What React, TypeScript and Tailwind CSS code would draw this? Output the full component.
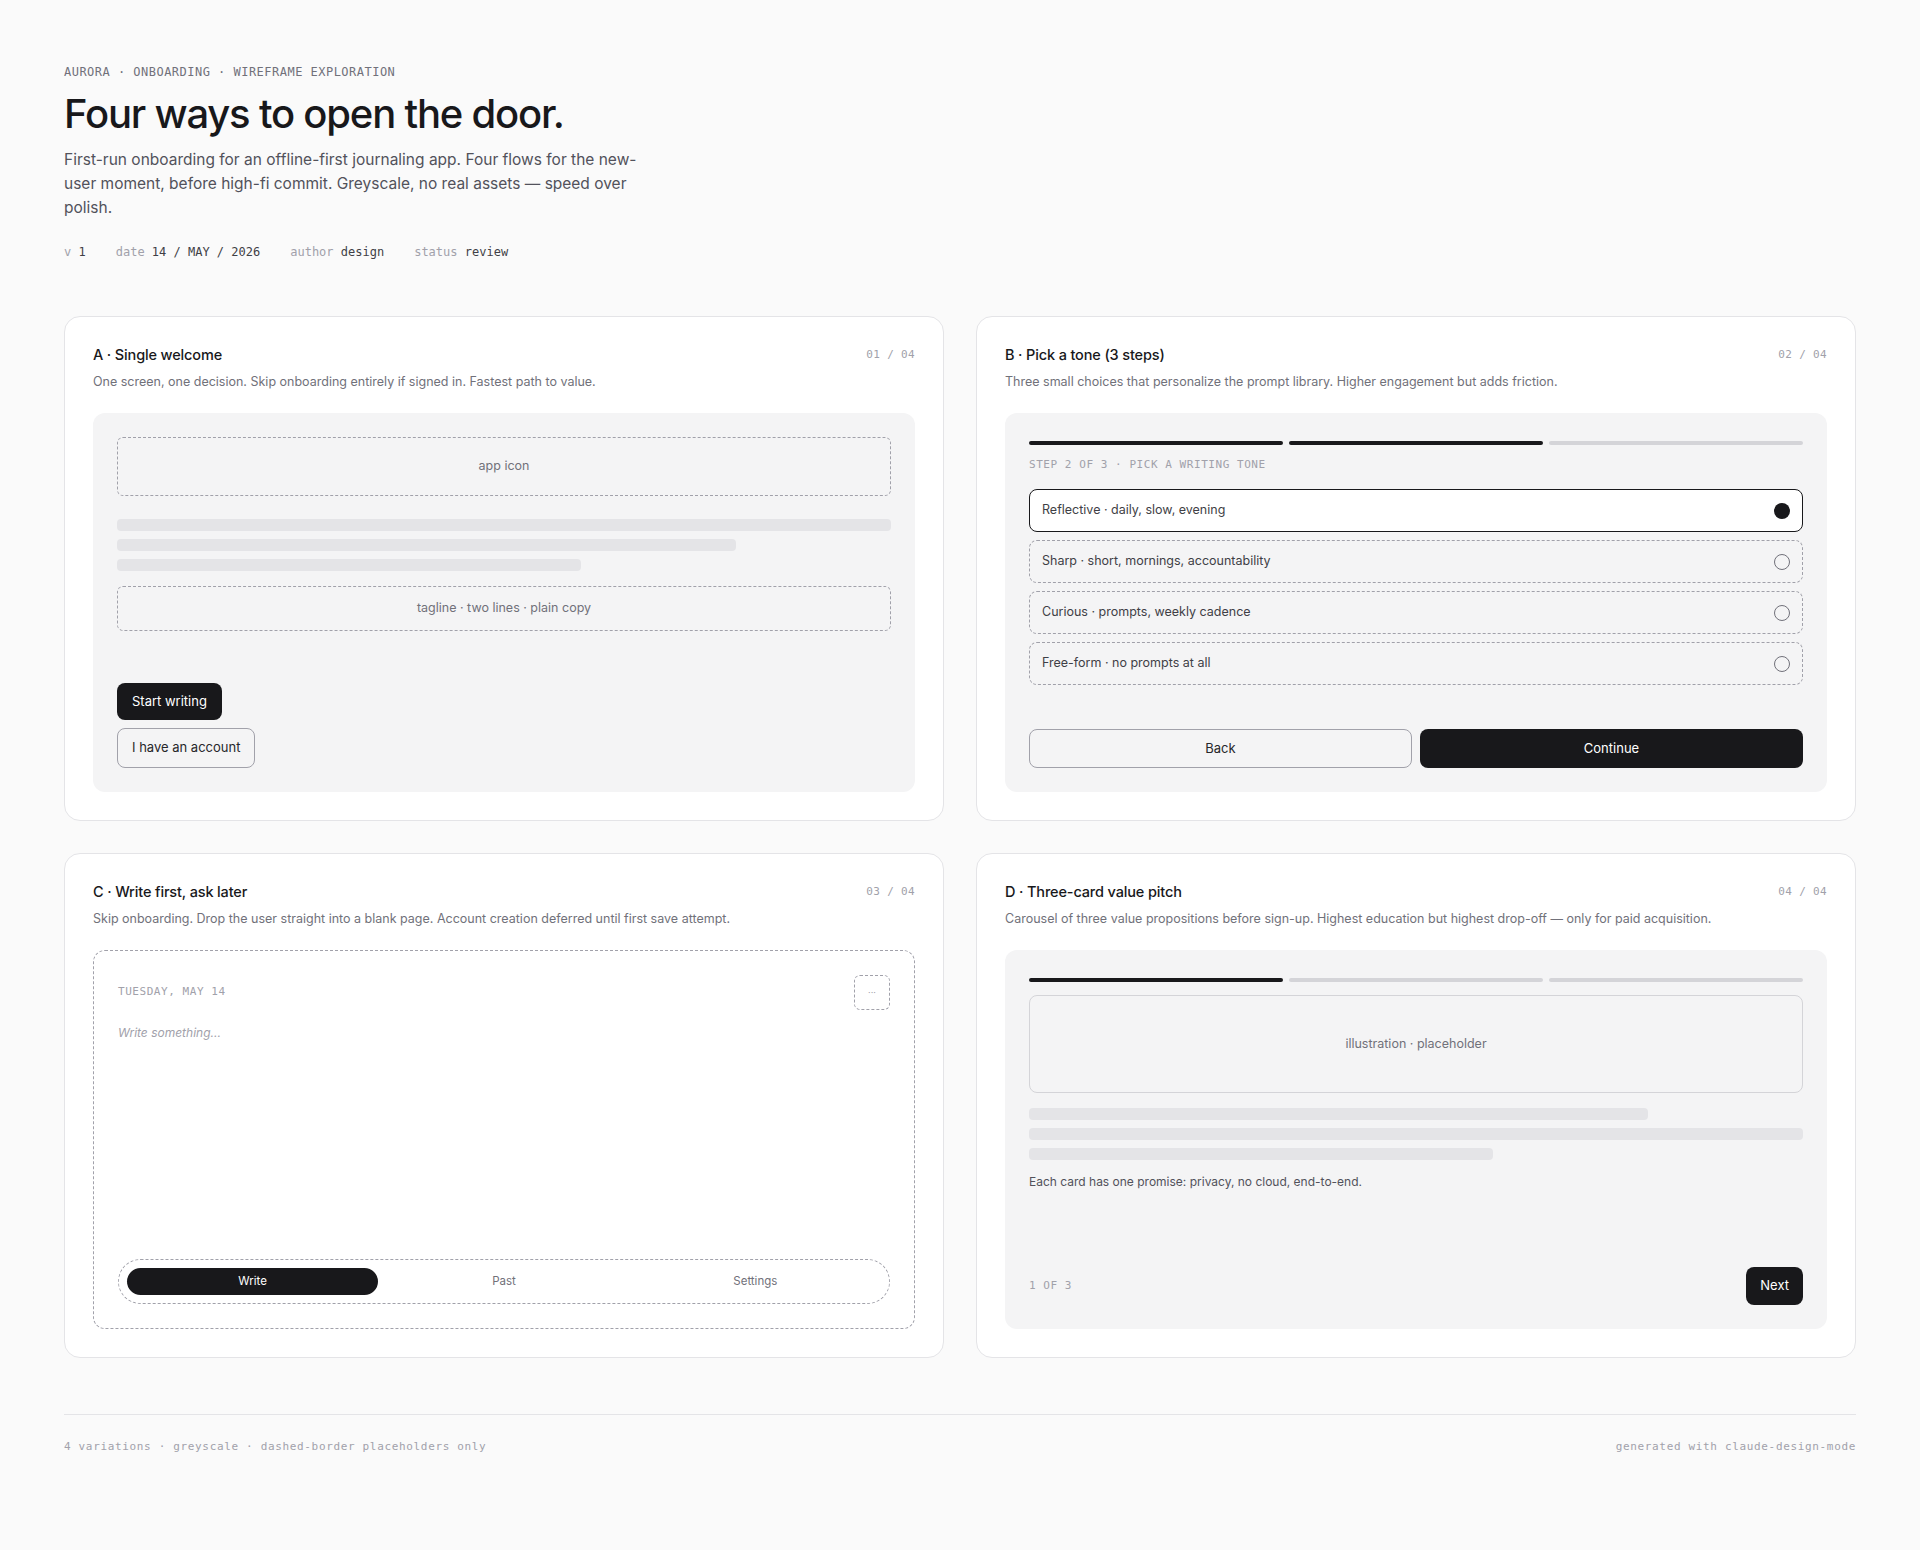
import React from "react";

const sans = "font-['Inter','Noto_Sans',sans-serif]";
const mono = "font-['DejaVu_Sans_Mono','Liberation_Mono',monospace]";

function Card({
  title,
  num,
  desc,
  children,
}: {
  title: string;
  num: string;
  desc: string;
  children: React.ReactNode;
}) {
  return (
    <div className="flex flex-col rounded-2xl border border-[#e4e4e7] bg-white p-7">
      <div className="flex items-center justify-between">
        <div className="text-[14.5px] font-medium leading-5 tracking-[-0.01em] text-[#18181b]">{title}</div>
        <div className={`${mono} text-[11px] tracking-[0.03em] text-[#a1a1aa]`}>{num}</div>
      </div>
      <div className="mt-2 text-[12.5px] leading-[17px] text-[#71717a]">{desc}</div>
      <div className="mt-[23px] flex min-h-[379px] flex-1 flex-col">{children}</div>
    </div>
  );
}

function Bars({ widths }: { widths: string[] }) {
  return (
    <div className="flex flex-col gap-2">
      {widths.map((w, i) => (
        <div key={i} className="h-3 rounded bg-[#e4e4e7]" style={{ width: w }} />
      ))}
    </div>
  );
}

function Progress({ active }: { active: number }) {
  return (
    <div className="mt-1 flex gap-1.5">
      {[0, 1, 2].map((i) => (
        <div
          key={i}
          className={`h-1 flex-1 rounded-full ${i < active ? "bg-[#18181b]" : "bg-[#d4d4d8]"}`}
        />
      ))}
    </div>
  );
}

function VariantA() {
  return (
    <div className="flex flex-1 flex-col rounded-xl bg-[#f4f4f5] p-6">
      <div className="flex h-[59px] items-center justify-center rounded-md border border-dashed border-[#a1a1aa] text-[12.5px] text-[#71717a]">
        app icon
      </div>
      <div className="mt-[23px]">
        <Bars widths={["100%", "80%", "60%"]} />
      </div>
      <div className="mt-[15px] flex h-[45px] items-center justify-center rounded-md border border-dashed border-[#a1a1aa] text-[12.5px] text-[#71717a]">
        tagline · two lines · plain copy
      </div>
      <div className="mt-auto flex flex-col items-start gap-2">
        <button className="h-[37px] rounded-lg bg-[#18181b] px-[15px] text-[13px] text-white">
          Start writing
        </button>
        <button className="h-10 rounded-lg border border-[#a1a1aa] px-[14px] text-[13px] text-[#27272a]">
          I have an account
        </button>
      </div>
    </div>
  );
}

const tones = [
  "Reflective · daily, slow, evening",
  "Sharp · short, mornings, accountability",
  "Curious · prompts, weekly cadence",
  "Free-form · no prompts at all",
];

function VariantB() {
  return (
    <div className="flex flex-1 flex-col rounded-xl bg-[#f4f4f5] p-6">
      <Progress active={2} />
      <div className={`${mono} mt-3 text-[11px] leading-4 tracking-[0.05em] text-[#a1a1aa]`}>
        STEP 2 OF 3 · PICK A WRITING TONE
      </div>
      <div className="mt-4 flex flex-col gap-2">
        {tones.map((t, i) =>
          i === 0 ? (
            <div
              key={t}
              className="flex h-[43px] items-center justify-between rounded-lg border border-[#18181b] bg-white px-3 text-[12.5px] text-[#3f3f46]"
            >
              <span>{t}</span>
              <span className="h-4 w-4 rounded-full bg-[#18181b]" />
            </div>
          ) : (
            <div
              key={t}
              className="flex h-[43px] items-center justify-between rounded-lg border border-dashed border-[#a1a1aa] px-3 text-[12.5px] text-[#3f3f46]"
            >
              <span>{t}</span>
              <span className="h-4 w-4 rounded-full border border-[#71717a]" />
            </div>
          )
        )}
      </div>
      <div className="mt-auto grid grid-cols-2 gap-2">
        <button className="h-[39px] rounded-lg border border-[#a1a1aa] text-[13px] text-[#27272a]">
          Back
        </button>
        <button className="h-[39px] rounded-lg bg-[#18181b] text-[13px] text-white">Continue</button>
      </div>
    </div>
  );
}

function VariantC() {
  return (
    <div className="flex flex-1 flex-col rounded-xl border border-dashed border-[#a1a1aa] bg-white p-6">
      <div className="flex items-center justify-between">
        <div className={`${mono} text-[11px] tracking-[0.05em] text-[#a1a1aa]`}>TUESDAY, MAY 14</div>
        <div className="flex h-[35px] w-9 items-center justify-center rounded-md border border-dashed border-[#a1a1aa] text-[9px] leading-none text-[#a1a1aa]">
          ···
        </div>
      </div>
      <div className="mt-[14px] text-[12px] italic text-[#a1a1aa]">Write something...</div>
      <div className="mt-auto flex rounded-full border border-dashed border-[#a1a1aa] p-2">
        <div className="flex h-[27px] flex-1 items-center justify-center rounded-full bg-[#18181b] text-[11.5px] text-white">
          Write
        </div>
        <div className="flex h-[27px] flex-1 items-center justify-center text-[11.5px] text-[#71717a]">Past</div>
        <div className="flex h-[27px] flex-1 items-center justify-center text-[11.5px] text-[#71717a]">
          Settings
        </div>
      </div>
    </div>
  );
}

function VariantD() {
  return (
    <div className="flex flex-1 flex-col rounded-xl bg-[#f4f4f5] p-6">
      <Progress active={1} />
      <div className="mt-[13px] flex h-[98px] items-center justify-center rounded-lg border border-[#d4d4d8] text-[12.5px] text-[#71717a]">
        illustration · placeholder
      </div>
      <div className="mt-[15px]">
        <Bars widths={["80%", "100%", "60%"]} />
      </div>
      <div className="mt-[13px] text-[12px] text-[#52525b]">
        Each card has one promise: privacy, no cloud, end-to-end.
      </div>
      <div className="mt-auto flex items-center justify-between">
        <div className={`${mono} text-[11px] tracking-[0.05em] text-[#a1a1aa]`}>1 OF 3</div>
        <button className="h-[38px] rounded-lg bg-[#18181b] px-3.5 text-[13px] text-white">Next</button>
      </div>
    </div>
  );
}

export default function App() {
  return (
    <div className={`${sans} min-h-screen bg-[#fafafa] text-[#18181b]`}>
      <div className="px-16 pb-16 pt-16">
        <div className={`${mono} text-[12px] leading-4 tracking-[0.04em] text-[#71717a]`}>
          AURORA · ONBOARDING · WIREFRAME EXPLORATION
        </div>
        <h1 className="mt-[10px] text-[40px] font-medium leading-[48px] tracking-[-0.03em] text-[#18181b]">
          Four ways to open the door.
        </h1>
        <p className="mt-2.5 max-w-[590px] text-[15.5px] leading-6 text-[#52525b]">
          First-run onboarding for an offline-first journaling app. Four flows for the new-user moment, before
          high-fi commit. Greyscale, no real assets — speed over polish.
        </p>
        <div className={`${mono} mt-6 flex gap-[30px] text-[12px] leading-4`}>
          <div>
            <span className="text-[#a1a1aa]">v</span> <span className="text-[#3f3f46]">1</span>
          </div>
          <div>
            <span className="text-[#a1a1aa]">date</span> <span className="text-[#3f3f46]">14 / MAY / 2026</span>
          </div>
          <div>
            <span className="text-[#a1a1aa]">author</span> <span className="text-[#3f3f46]">design</span>
          </div>
          <div>
            <span className="text-[#a1a1aa]">status</span> <span className="text-[#3f3f46]">review</span>
          </div>
        </div>

        <div className="mt-14 grid grid-cols-2 gap-8">
          <Card
            title="A · Single welcome"
            num="01 / 04"
            desc="One screen, one decision. Skip onboarding entirely if signed in. Fastest path to value."
          >
            <VariantA />
          </Card>
          <Card
            title="B · Pick a tone (3 steps)"
            num="02 / 04"
            desc="Three small choices that personalize the prompt library. Higher engagement but adds friction."
          >
            <VariantB />
          </Card>
          <Card
            title="C · Write first, ask later"
            num="03 / 04"
            desc="Skip onboarding. Drop the user straight into a blank page. Account creation deferred until first save attempt."
          >
            <VariantC />
          </Card>
          <Card
            title="D · Three-card value pitch"
            num="04 / 04"
            desc="Carousel of three value propositions before sign-up. Highest education but highest drop-off — only for paid acquisition."
          >
            <VariantD />
          </Card>
        </div>

        <div
          className={`${mono} mt-14 flex justify-between border-t border-[#e4e4e7] pt-6 text-[11px] tracking-[0.06em] text-[#a1a1aa]`}
        >
          <span>4 variations · greyscale · dashed-border placeholders only</span>
          <span>generated with claude-design-mode</span>
        </div>
      </div>
    </div>
  );
}
